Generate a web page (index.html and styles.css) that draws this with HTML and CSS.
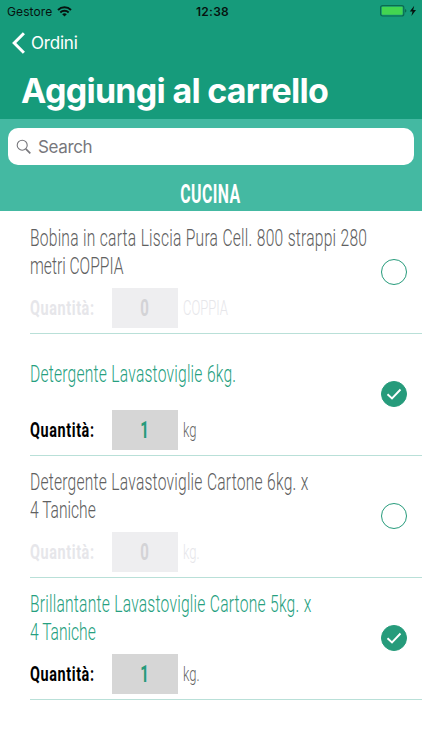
FILE: index.html
```
<!DOCTYPE html>
<html lang="it">
<head>
  <meta charset="UTF-8">
  <meta name="viewport" content="width=device-width, initial-scale=1.0">
  <title>Aggiungi al carrello</title>
  <link rel="stylesheet" href="styles.css">
</head>
<body>
  <header class="header">
    <div class="status-bar">
      <div class="carrier">
        <span>Gestore</span>
        <svg width="15" height="11" viewBox="0 0 15 11">
          <path d="M1 4 A9.3 9.3 0 0 1 14 4" fill="none" stroke="#06130f" stroke-width="2"/>
          <path d="M3.3 6.5 A6 6 0 0 1 11.7 6.5" fill="none" stroke="#06130f" stroke-width="1.9"/>
          <path d="M5.2 8.3 A3.3 3.3 0 0 1 9.8 8.3 L7.5 10.6 Z" fill="#06130f"/>
        </svg>
      </div>
      <span class="time">12:38</span>
      <svg class="battery" width="38" height="12" viewBox="0 0 38 12">
        <rect x=".6" y=".6" width="23.2" height="10.4" rx="2" fill="none" stroke="#0b6b50" stroke-width="1.2"/>
        <rect x="1.8" y="1.8" width="20.8" height="8" rx=".8" fill="#43d551"/>
        <path d="M25 4 Q26.4 4.4 26.4 5.8 Q26.4 7.2 25 7.6 Z" fill="#0b6b50"/>
        <path d="M34.2 .8 L29.8 6.4 H32.5 L31.4 10.9 L36 5 H33.2 Z" fill="#06130f"/>
      </svg>
    </div>
    <a class="back" href="#">
      <svg width="14" height="22" viewBox="0 0 14 22">
        <path d="M11.9 1.2 L2.2 11 L11.9 20.8" fill="none" stroke="#fff" stroke-width="3"/>
      </svg>
      <span>Ordini</span>
    </a>
    <h1>Aggiungi al carrello</h1>
  </header>

  <section class="search-area">
    <div class="search">
      <svg width="16" height="16" viewBox="0 0 16 16">
        <circle cx="6.2" cy="6.2" r="5" fill="none" stroke="#77777c" stroke-width="1.1"/>
        <path d="M9.8 9.8 L14.3 14.3" stroke="#77777c" stroke-width="1.7"/>
      </svg>
      <span>Search</span>
    </div>
    <h2><span class="narrow">CUCINA</span></h2>
  </section>

  <main class="products">
    <article class="product">
      <div class="name">
        <span class="narrow">Bobina in carta Liscia Pura Cell. 800 strappi 280</span>
        <span class="narrow">metri COPPIA</span>
      </div>
      <div class="quantity">
        <span class="label"><b class="narrow">Quantità:</b></span>
        <span class="amount"><b class="narrow">0</b></span>
        <span class="unit narrow">COPPIA</span>
      </div>
      <span class="check"></span>
    </article>

    <article class="product selected">
      <div class="name">
        <span class="narrow">Detergente Lavastoviglie 6kg.</span>
      </div>
      <div class="quantity">
        <span class="label"><b class="narrow">Quantità:</b></span>
        <span class="amount"><b class="narrow">1</b></span>
        <span class="unit narrow">kg</span>
      </div>
      <span class="check">
        <svg width="16" height="12" viewBox="0 0 16 12"><path d="M1.5 6.3 L6 10.5 L14.5 1.5" fill="none" stroke="#fff" stroke-width="1.9"/></svg>
      </span>
    </article>

    <article class="product">
      <div class="name">
        <span class="narrow">Detergente Lavastoviglie Cartone 6kg. x</span>
        <span class="narrow">4 Taniche</span>
      </div>
      <div class="quantity">
        <span class="label"><b class="narrow">Quantità:</b></span>
        <span class="amount"><b class="narrow">0</b></span>
        <span class="unit narrow">kg.</span>
      </div>
      <span class="check"></span>
    </article>

    <article class="product selected">
      <div class="name">
        <span class="narrow">Brillantante Lavastoviglie Cartone 5kg. x</span>
        <span class="narrow">4 Taniche</span>
      </div>
      <div class="quantity">
        <span class="label"><b class="narrow">Quantità:</b></span>
        <span class="amount"><b class="narrow">1</b></span>
        <span class="unit narrow">kg.</span>
      </div>
      <span class="check">
        <svg width="16" height="12" viewBox="0 0 16 12"><path d="M1.5 6.3 L6 10.5 L14.5 1.5" fill="none" stroke="#fff" stroke-width="1.9"/></svg>
      </span>
    </article>
  </main>
</body>
</html>
```
FILE: styles.css
```
* {
  margin: 0;
  padding: 0;
  box-sizing: border-box;
}

body {
  font-family: Inter, "Liberation Sans", sans-serif;
  background: #fff;
  height: 750px;
  overflow: hidden;
}

svg {
  display: block;
  flex-shrink: 0;
}

.header {
  height: 119px;
  background: #169b7b;
  color: #fff;
}

.status-bar {
  display: grid;
  grid-template-columns: 1fr auto 1fr;
  align-items: center;
  height: 22px;
  padding: 0 4px 0 7px;
  color: #06130f;
  font-size: 12px;
}

.carrier {
  display: flex;
  align-items: center;
  gap: 5px;
  letter-spacing: 0.1px;
}

.time {
  font-weight: 600;
  letter-spacing: 0.3px;
}

.battery {
  justify-self: end;
}

.back {
  display: flex;
  align-items: center;
  gap: 5px;
  height: 42px;
  padding-left: 12px;
  color: #fff;
  font-size: 17px;
  letter-spacing: -0.2px;
  text-decoration: none;
}

h1 {
  padding-left: 21px;
  font-size: 34px;
  font-weight: 700;
  line-height: 53px;
  letter-spacing: -0.72px;
  white-space: nowrap;
}

.search-area {
  height: 92px;
  padding: 9px 8px 0;
  background: #44b9a2;
}

.search {
  display: flex;
  align-items: center;
  gap: 6px;
  height: 37px;
  padding-left: 8px;
  border-radius: 10px;
  background: #fff;
  color: #77777c;
  font-size: 17px;
  letter-spacing: -0.35px;
}

/* Condensed lettering */
.narrow {
  display: block;
  width: max-content;
  white-space: nowrap;
  transform: scaleX(0.65);
  transform-origin: left center;
}

h2 {
  display: flex;
  justify-content: center;
  padding-top: 9px;
  color: #fff;
  font-family: Roboto, sans-serif;
  font-size: 26px;
  font-weight: 700;
  line-height: 41px;
}

h2 .narrow {
  transform: scaleX(0.61);
  letter-spacing: 0.7px;
}

h2 .narrow,
.amount .narrow {
  transform-origin: center;
}

.products {
  padding-top: 1px;
  font-family: Roboto, sans-serif;
}

.product {
  display: grid;
  grid-template-columns: 340px 1fr;
  grid-template-rows: 56px 40px;
  row-gap: 8px;
  height: 122px;
  margin-left: 30px;
  padding: 12px 0 5px;
  border-bottom: 1px solid #b9e0d8;
}

.name {
  display: flex;
  flex-direction: column;
  justify-content: center;
  color: #606060;
  font-size: 24px;
  font-weight: 300;
  line-height: 28px;
}

.name .narrow:first-child {
  letter-spacing: 0.34px;
  word-spacing: 0.4px;
}

.quantity {
  display: flex;
  align-items: center;
  grid-row: 2;
  color: #e6e6ea;
  font-size: 20px;
}

.label {
  width: 82px;
}

.label .narrow {
  transform: scaleX(0.72);
  letter-spacing: 0.85px;
}

.amount {
  display: flex;
  align-items: center;
  justify-content: center;
  width: 66px;
  height: 40px;
  margin-right: 5px;
  background: #eeeef0;
  color: #d3d3d6;
  font-size: 23px;
}

.unit {
  font-weight: 300;
}

.check {
  display: flex;
  align-items: center;
  justify-content: center;
  grid-column: 2;
  grid-row: 1 / 3;
  width: 26px;
  height: 26px;
  margin: 35px 0 0 11px;
  border: 1px solid #269b7b;
  border-radius: 50%;
}

.selected .name {
  color: #269f80;
}

.selected .label {
  color: #000;
}

.selected .amount {
  background: #d6d6d6;
  color: #269b7b;
}

.selected .unit {
  color: #666;
}

.selected .check {
  background: #269b7b;
}
```
